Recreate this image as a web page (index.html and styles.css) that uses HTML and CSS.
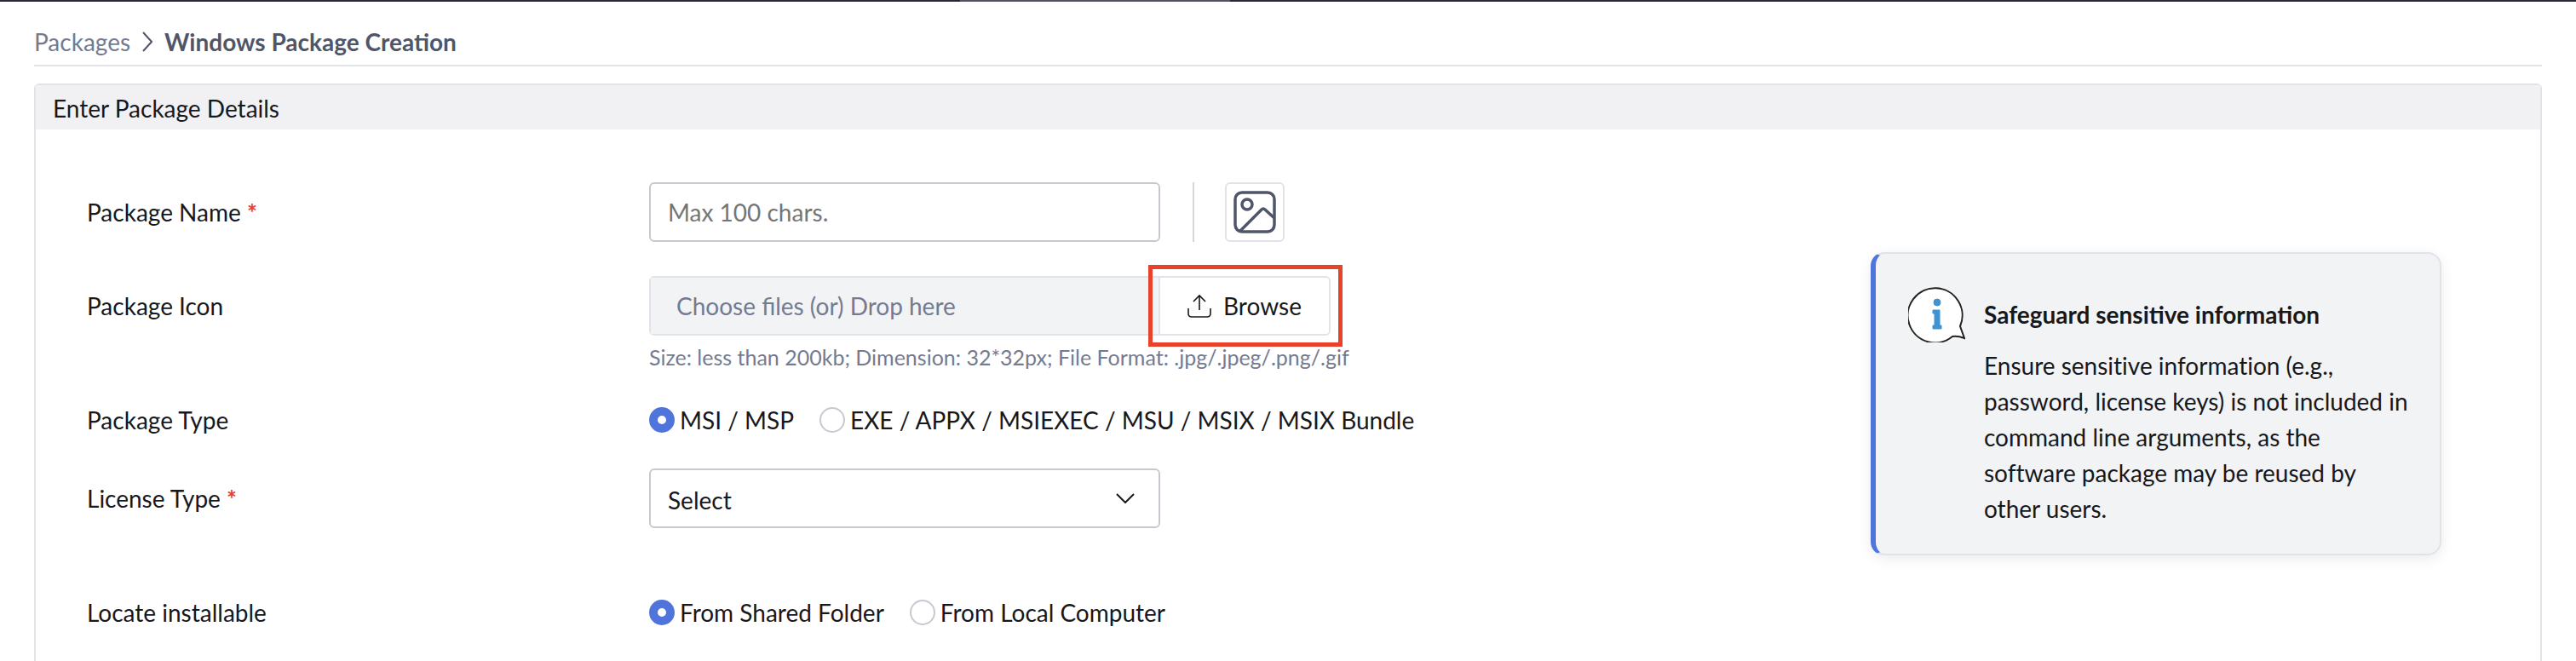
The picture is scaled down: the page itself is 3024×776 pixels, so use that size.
FILE: index.html
```html
<!DOCTYPE html>
<html lang="en">
<head>
  <title>Windows Package Creation</title>
  <meta charset="utf-8">
  <meta name="viewport" content="width=device-width, initial-scale=1">
  <link rel="stylesheet" href="styles.css">
</head>
<body>
  <div class="topbar">
    <div class="topbar__active"></div>
  </div>

  <main class="page">
    <nav class="breadcrumb" aria-label="Breadcrumb">
      <a class="breadcrumb__link" href="#">Packages</a>
      <svg class="breadcrumb__arrow" viewBox="0 0 12 24" aria-hidden="true">
        <path d="M1 1l10 11L1 23"/>
      </svg>
      <h1 class="breadcrumb__current">Windows Package Creation</h1>
    </nav>

    <section class="panel">
      <h2 class="panel__title">Enter Package Details</h2>

      <div class="panel__body">
        <form class="form">
          <div class="form__row">
            <label class="form__label" for="package-name">Package Name <span class="form__required">*</span></label>
            <div class="form__control">
              <input class="input" id="package-name" type="text" placeholder="Max 100 chars.">
              <span class="form__divider"></span>
              <button class="icon-button" type="button" aria-label="Package image">
                <svg class="icon-button__icon" viewBox="0 0 50 50" aria-hidden="true">
                  <rect x="2" y="2" width="46" height="46" rx="8"/>
                  <circle cx="16" cy="16" r="6"/>
                  <path d="M8 47l25-25q2-2 4 0l11 10"/>
                </svg>
              </button>
            </div>
          </div>

          <div class="form__row">
            <label class="form__label" for="package-icon">Package Icon</label>
            <div class="upload">
              <div class="upload__field">
                <input class="upload__input" id="package-icon" type="text" placeholder="Choose files (or) Drop here" readonly>
                <button class="upload__button" type="button">
                  <svg class="upload__icon" viewBox="0 0 28 28" aria-hidden="true">
                    <path d="M14 19V2M7 9l7-7 7 7M1 17v6q0 4 4 4h18q4 0 4-4v-6"/>
                  </svg>
                  Browse
                </button>
                <span class="upload__highlight"></span>
              </div>
              <p class="upload__hint">Size: less than 200kb; Dimension: 32*32px; File Format: .jpg/.jpeg/.png/.gif</p>
            </div>
          </div>

          <div class="form__row" role="radiogroup" aria-labelledby="package-type">
            <span class="form__label" id="package-type">Package Type</span>
            <div class="form__options">
              <label class="radio"><input class="radio__input" type="radio" name="type" checked>MSI / MSP</label>
              <label class="radio"><input class="radio__input" type="radio" name="type">EXE / APPX / MSIEXEC / MSU / MSIX / MSIX Bundle</label>
            </div>
          </div>

          <div class="form__row">
            <label class="form__label" for="license-type">License Type <span class="form__required">*</span></label>
            <div class="select">
              <select class="select__field" id="license-type">
                <option>Select</option>
              </select>
              <svg class="select__arrow" viewBox="0 0 22 12" aria-hidden="true">
                <path d="M1 1l10 10L21 1"/>
              </svg>
            </div>
          </div>

          <div class="form__row form__row--spaced" role="radiogroup" aria-labelledby="locate">
            <span class="form__label" id="locate">Locate installable</span>
            <div class="form__options">
              <label class="radio"><input class="radio__input" type="radio" name="locate" checked>From Shared Folder</label>
              <label class="radio"><input class="radio__input" type="radio" name="locate">From Local Computer</label>
            </div>
          </div>
        </form>

        <aside class="notice">
          <svg class="notice__icon" viewBox="0 0 67 66" aria-hidden="true">
            <path class="notice__bubble" d="M52 59A32 32 0 1 1 61 47L66 61Q58 58 52 59Z"/>
            <circle class="notice__mark" cx="34" cy="19" r="4"/>
            <path class="notice__mark" d="M29 28h8v18h2v4H29v-4h2V32h-2z"/>
          </svg>
          <div class="notice__content">
            <h3 class="notice__title">Safeguard sensitive information</h3>
            <p class="notice__text">Ensure sensitive information (e.g., password, license keys) is not included in command line arguments, as the software package may be reused by other users.</p>
          </div>
        </aside>
      </div>
    </section>
  </main>
</body>
</html>
```
FILE: styles.css
```css
*, *::before, *::after {
  margin: 0;
  padding: 0;
  box-sizing: border-box;
}

body {
  display: flex;
  flex-direction: column;
  min-height: 100vh;
  background-color: #ffffff;
  color: #17181c;
  font-family: "Lato", sans-serif;
  font-size: 28px;
  line-height: 34px;
  text-rendering: optimizeLegibility;
}

input, select, button {
  font: inherit;
  color: inherit;
  text-rendering: inherit;
}

svg {
  flex-shrink: 0;
  fill: none;
  stroke: currentColor;
}

.topbar {
  height: 2px;
  padding-left: 1127px;
  background-color: #2b2735;
}

.topbar__active {
  width: 317px;
  height: 2px;
  background-color: #535263;
}

.page {
  display: flex;
  flex: 1;
  flex-direction: column;
  padding: 0 40px;
}

.breadcrumb {
  display: flex;
  align-items: center;
  gap: 14px;
  padding: 30px 0 10px;
  border-bottom: 2px solid #e2e3e9;
}

.breadcrumb__link {
  color: #747b90;
  text-decoration: none;
}

.breadcrumb__arrow {
  width: 12px;
  height: 24px;
  color: #50566a;
  stroke-width: 2;
}

.breadcrumb__current {
  color: #50566a;
  font-size: 28px;
  font-weight: 700;
}

.panel {
  flex: 1;
  margin-top: 20px;
  border: 2px solid #e2e3e9;
  border-bottom: none;
  border-radius: 6px 6px 0 0;
}

.panel__title {
  padding: 10px 20px 8px;
  background-color: #f1f1f4;
  font-size: 28px;
  font-weight: 400;
}

.panel__body {
  display: flex;
  align-items: flex-start;
  justify-content: space-between;
  padding: 62px 116px 20px 60px;
}

.form {
  display: flex;
  flex-direction: column;
  gap: 40px;
}

.form__row {
  display: grid;
  grid-template-columns: 660px auto;
}

.form__row--spaced {
  margin-top: 42px;
}

.form__label {
  padding: 18px 0;
}

.form__row[role="radiogroup"] .form__label {
  padding: 0;
}

.form__required {
  color: #e8402c;
  font-weight: 700;
}

.form__control {
  display: flex;
  align-items: center;
}

.form__divider {
  width: 2px;
  height: 70px;
  margin: 0 36px 0 38px;
  background-color: #d5d6dc;
}

.form__options {
  display: flex;
  gap: 30px;
}

.input {
  width: 600px;
  height: 70px;
  padding: 0 20px;
  border: 2px solid #c8c9d0;
  border-radius: 6px;
}

.input::placeholder {
  color: #757575;
}

.icon-button {
  display: grid;
  place-items: center;
  width: 70px;
  height: 70px;
  border: 2px solid #e2e3e9;
  border-radius: 6px;
  background-color: #ffffff;
  color: #50566a;
}

.icon-button__icon {
  width: 50px;
  height: 50px;
  stroke-width: 3.5;
}

.upload__field {
  position: relative;
  display: flex;
  width: 800px;
  height: 70px;
  border: 2px solid #e2e3e9;
  border-radius: 6px;
}

.upload__input {
  flex: 1;
  min-width: 0;
  padding: 0 30px;
  border: none;
  background-color: #f1f3f5;
}

.upload__input::placeholder {
  color: #747b90;
}

.upload__button {
  display: flex;
  align-items: center;
  justify-content: center;
  gap: 14px;
  width: 200px;
  border: none;
  border-left: 2px solid #e2e3e9;
  border-radius: 0 4px 4px 0;
  background-color: #ffffff;
}

.upload__icon {
  width: 28px;
  height: 28px;
  stroke-width: 1.6;
}

.upload__highlight {
  position: absolute;
  top: -15px;
  right: -16px;
  bottom: -15px;
  width: 228px;
  border: 5px solid #e8432a;
  pointer-events: none;
}

.upload__hint {
  margin-top: 8px;
  color: #747b90;
  font-size: 25px;
}

.radio {
  display: flex;
  align-items: center;
  gap: 6px;
}

.radio__input {
  width: 30px;
  height: 30px;
  appearance: none;
  border: 2px solid #c8c9d0;
  border-radius: 50%;
  background-color: #ffffff;
}

.radio__input:checked {
  border: 10px solid #4f74dc;
}

.select {
  position: relative;
  width: 600px;
}

.select__field {
  display: block;
  width: 100%;
  height: 70px;
  padding: 4px 20px 0;
  appearance: none;
  border: 2px solid #c8c9d0;
  border-radius: 6px;
  background-color: #ffffff;
}

.select__arrow {
  position: absolute;
  top: 29px;
  right: 30px;
  width: 22px;
  height: 12px;
  stroke-width: 2;
  pointer-events: none;
}

.notice {
  display: flex;
  gap: 22px;
  width: 670px;
  margin-top: 82px;
  padding: 38px 36px 32px 38px;
  border: 2px solid #e2e3e9;
  border-left: 6px solid #4f74dc;
  border-radius: 16px;
  background-color: #f1f3f5;
  box-shadow: 0 4px 16px rgba(0, 0, 0, .08);
}

.notice__icon {
  width: 67px;
  height: 66px;
}

.notice__bubble {
  fill: #ffffff;
  stroke: #222222;
  stroke-width: 2;
}

.notice__mark {
  fill: #3f93d0;
  stroke: #3f93d0;
  stroke-width: 1;
}

.notice__title {
  margin-top: 16px;
  font-size: 28px;
  font-weight: 700;
}

.notice__text {
  margin-top: 22px;
  font-variant-ligatures: none;
  line-height: 42px;
}
```
